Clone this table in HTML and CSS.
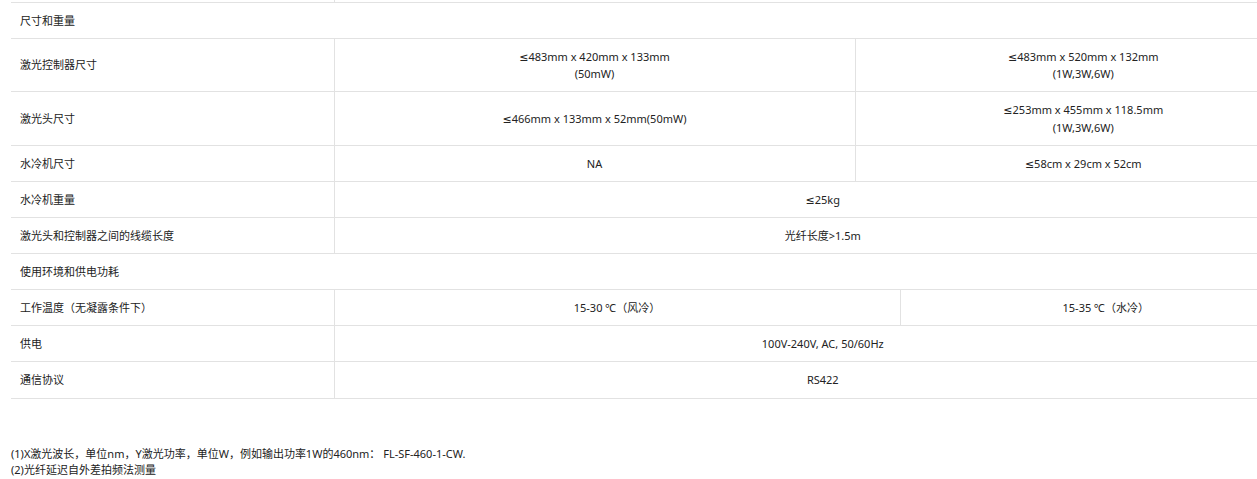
FILE: index.html
```html
<!DOCTYPE html>
<html lang="zh-CN">
<head>
<meta charset="utf-8">
<title>规格</title>
<link rel="stylesheet" href="styles.css">
</head>
<body>
<div class="page">
  <table class="spec">
    <colgroup>
      <col class="c1"><col class="c2"><col class="c3"><col class="c4">
    </colgroup>
    <tbody>
      <tr class="cut"><td></td><td colspan="3"></td></tr>
      <tr class="section"><td colspan="4">尺寸和重量</td></tr>
      <tr><td class="label">激光控制器尺寸</td><td>≤483mm x 420mm x 133mm<br>(50mW)</td><td colspan="2">≤483mm x 520mm x 132mm<br>(1W,3W,6W)</td></tr>
      <tr><td class="label">激光头尺寸</td><td>≤466mm x 133mm x 52mm(50mW)</td><td colspan="2">≤253mm x 455mm x 118.5mm<br>(1W,3W,6W)</td></tr>
      <tr><td class="label">水冷机尺寸</td><td>NA</td><td colspan="2">≤58cm x 29cm x 52cm</td></tr>
      <tr><td class="label">水冷机重量</td><td colspan="3">≤25kg</td></tr>
      <tr><td class="label">激光头和控制器之间的线缆长度</td><td colspan="3">光纤长度&gt;1.5m</td></tr>
      <tr class="section"><td colspan="4">使用环境和供电功耗</td></tr>
      <tr><td class="label">工作温度（无凝露条件下）</td><td colspan="2">15-30 ℃（风冷）</td><td>15-35 ℃（水冷）</td></tr>
      <tr><td class="label">供电</td><td colspan="3">100V-240V, AC, 50/60Hz</td></tr>
      <tr class="last"><td class="label">通信协议</td><td colspan="3">RS422</td></tr>
    </tbody>
  </table>
  <div class="notes">
    <p>(1)X激光波长，单位nm，Y激光功率，单位W，例如输出功率1W的460nm： FL-SF-460-1-CW.</p>
    <p>(2)光纤延迟自外差拍频法测量</p>
  </div>
</div>
</body>
</html>
```

FILE: styles.css
```css
html, body {
  margin: 0;
  padding: 0;
  background: #fff;
}

body {
  font-family: "Noto Sans", "DejaVu Sans", "Noto Sans CJK SC", sans-serif;
  font-size: 11px;
  color: #222;
}

.page {
  overflow: hidden;
  padding-left: 11px;
  height: 479px;
}

.spec {
  width: 1300px;
  border-collapse: collapse;
  table-layout: fixed;
  margin-top: -35px;
}

.spec col.c1 { width: 323px; }
.spec col.c2 { width: 521px; }
.spec col.c3 { width: 45px; }
.spec col.c4 { width: 411px; }

.spec td {
  border-top: 1px solid #e2e2e2;
  border-bottom: 1px solid #e2e2e2;
  border-left: 1px solid #e2e2e2;
  padding: 9px 9px 8.5px;
  line-height: 17.5px;
  text-align: center;
  vertical-align: middle;
}

.spec td:first-child {
  border-left: none;
  text-align: left;
}

.spec tr.cut td {
  height: 18px;
}

.spec tr.last td {
  padding-bottom: 9.5px;
}

.notes {
  margin-top: 47px;
}

.notes p {
  margin: 0;
  line-height: 16px;
}
```
